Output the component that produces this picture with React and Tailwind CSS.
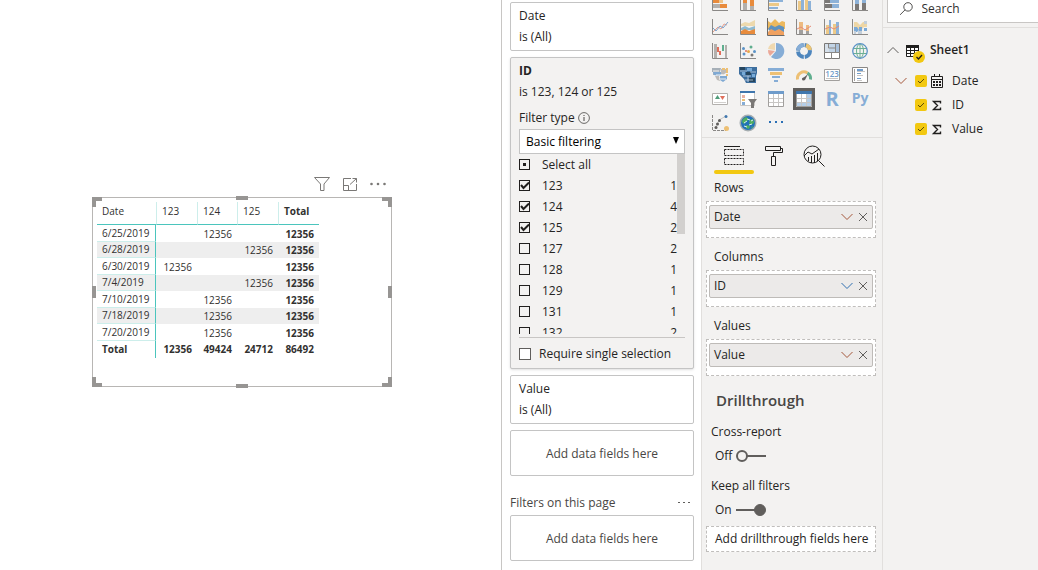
import { useState } from "react";
import clsx from "clsx";

const COLUMNS = ["123", "124", "125"];

const MATRIX = [
  { date: "6/25/2019", values: ["", "12356", ""], total: "12356" },
  { date: "6/28/2019", values: ["", "", "12356"], total: "12356" },
  { date: "6/30/2019", values: ["12356", "", ""], total: "12356" },
  { date: "7/4/2019", values: ["", "", "12356"], total: "12356" },
  { date: "7/10/2019", values: ["", "12356", ""], total: "12356" },
  { date: "7/18/2019", values: ["", "12356", ""], total: "12356" },
  { date: "7/20/2019", values: ["", "12356", ""], total: "12356" },
];

const FILTER_ITEMS = [
  { id: "123", count: 1 },
  { id: "124", count: 4 },
  { id: "125", count: 2 },
  { id: "127", count: 2 },
  { id: "128", count: 1 },
  { id: "129", count: 1 },
  { id: "131", count: 1 },
  { id: "132", count: 2 },
];

const axis = <path d="M.5 0V15.5H16" fill="none" stroke="#8a8886" />;

const VISUALS = [
  {
    name: "Stacked bar chart",
    art: (
      <>
        <path d="M1 4h6v4H1z" fill="#e88b3c" />
        <path d="M7 4h4v4H7z" fill="#edc48a" />
        <path d="M1 9h7v4H1z" fill="#b3b0ad" />
        <path d="M8 9h7v4H8z" fill="#e88b3c" />
        {axis}
      </>
    ),
  },
  {
    name: "Stacked column chart",
    art: (
      <>
        <path d="M3 8h4v7H3zM10 11h4v4h-4z" fill="#b3b0ad" />
        <path d="M3 2h4v6H3zM10 4h4v7h-4z" fill="#e88b3c" />
        {axis}
      </>
    ),
  },
  {
    name: "Clustered bar chart",
    art: (
      <>
        <path d="M1 5h14v2H1zM1 12h9v2H1z" fill="#8db2d8" />
        <path d="M1 8h10v3H1z" fill="#edc987" />
        {axis}
      </>
    ),
  },
  {
    name: "Clustered column chart",
    art: (
      <>
        <path d="M2 6h3v9H2zM9 4h3v11H9z" fill="#edc987" />
        <path d="M5 2h3v13H5zM12 6h3v9h-3z" fill="#8db2d8" />
        {axis}
      </>
    ),
  },
  {
    name: "100% stacked bar chart",
    art: (
      <>
        <path d="M1 4h5v4H1zM1 9h7v4H1z" fill="#7a7876" />
        <path d="M6 4h9v4H6zM8 9h7v4H8z" fill="#8db2d8" />
        {axis}
      </>
    ),
  },
  {
    name: "100% stacked column chart",
    art: (
      <>
        <path d="M3 9h4v6H3zM10 8h4v7h-4z" fill="#7a7876" />
        <path d="M3 2h4v7H3zM10 2h4v6h-4z" fill="#8db2d8" />
        {axis}
      </>
    ),
  },
  {
    name: "Line chart",
    art: (
      <>
        <path d="M1 13l5-5 3 2 3-5 3 1" fill="none" stroke="#e9a08d" />
        <path d="M1 9l3 3 4-5 3 2 5-6" fill="none" stroke="#7ba3cd" />
        {axis}
      </>
    ),
  },
  {
    name: "Area chart",
    art: (
      <>
        <path d="M1 5l4-2 4 1 6-3v6H1z" fill="#edd9ad" />
        <path d="M1 9l4-2 4 2 6-2v4H1z" fill="#8fbad0" />
        <path d="M1 12l4-2 4 2 6-2v5H1z" fill="#e88b3c" />
        {axis}
      </>
    ),
  },
  {
    name: "Stacked area chart",
    art: (
      <>
        <path d="M0 2l3 2 4-4 4 4 3-2 3 1v7H0z" fill="#edb95e" />
        <path d="M0 10l3-4 4 2 4-2 5 2v5l-3 2-9-1z" fill="#5f92bf" />
        <path d="M0 13l3-3 4 2 4-2 5 3v3H0z" fill="#f0a160" />
        <path d="M-.5-1v17.500h17" fill="none" stroke="#6b6967" />
      </>
    ),
  },
  {
    name: "Line and stacked column chart",
    art: (
      <>
        <path d="M3 3h4v9H3zM10 6h3v7h-3z" fill="#edba80" />
        <path d="M3 11h4v4H3zM10 12h3v3h-3z" fill="#a19f9d" />
        <path d="M1 10l4-2 4 3 6-4" fill="none" stroke="#e58a78" />
        {axis}
      </>
    ),
  },
  {
    name: "Line and clustered column chart",
    art: (
      <>
        <path d="M2 6h3v9H2zM9 5h3v10H9z" fill="#edc987" />
        <path d="M5 1h2v14H5zM12 3h3v12h-3z" fill="#8db2d8" />
        <path d="M1 10l5-2 4 2 5-3" fill="none" stroke="#e58a78" />
        {axis}
      </>
    ),
  },
  {
    name: "Ribbon chart",
    art: (
      <>
        <path d="M2 3h3l3 3 3-3h4v5h-3l-4 4-4-4H2z" fill="#edd6a5" />
        <path d="M2 8h3l2 3-2 2H2zM7 8h3v4H7zM12 9h3v3h-3z" fill="#7ba9d6" />
        <path d="M2 12h2v3H2zM6 12h4v3H6zM12 2h3v3h-3z" fill="#c3cfda" />
        {axis}
      </>
    ),
  },
  {
    name: "Waterfall chart",
    art: (
      <>
        <path d="M2 1h3v14H2zM13 2h2v13h-2z" fill="#b3b0ad" />
        <path d="M5 4h2v5H5zM7 8h2v4H7z" fill="#e0705c" />
        <path d="M10 2h2v6h-2z" fill="#5fae8e" />
        {axis}
      </>
    ),
  },
  {
    name: "Scatter chart",
    art: (
      <>
        <circle cx="3.500" cy="5.500" r="1.500" fill="#5b93c7" />
        <circle cx="11" cy="4" r="1.500" fill="#5fae8e" />
        <circle cx="4" cy="11" r="1.500" fill="#5b93c7" />
        <circle cx="8.500" cy="8.500" r="1.500" fill="#e8a94a" />
        <circle cx="14.500" cy="8.500" r="1.500" fill="#5b93c7" />
        <circle cx="6" cy="8" r="1" fill="#e0705c" />
        <circle cx="12" cy="12" r="1.500" fill="#7a7876" />
        {axis}
      </>
    ),
  },
  {
    name: "Pie chart",
    art: (
      <>
        <path d="M8 8V0a8 8 0 1 1-5 14z" fill="#86add6" />
        <path d="M7 7V0a7 7 0 0 0-7 6z" fill="#f0d9b0" />
        <path d="M7 8L0 7a8 8 0 0 0 2 6z" fill="#eba898" />
      </>
    ),
  },
  {
    name: "Donut chart",
    art: (
      <>
        <circle cx="8" cy="8" r="6" fill="none" stroke="#4e86bd" strokeWidth="4" strokeDasharray="8.400 1" />
        <path d="M10 2.300A6 6 0 0 1 14 7" fill="none" stroke="#edc472" strokeWidth="4" />
        <path d="M2.200 7A6 6 0 0 1 7 2" fill="none" stroke="#86add6" strokeWidth="4" />
      </>
    ),
  },
  {
    name: "Treemap",
    art: (
      <>
        <path d="M.5.5h15v15H.5z" fill="#fff" stroke="#7a7876" />
        <path d="M1 1h9v8H1z" fill="#d6e0ea" />
        <path d="M5 1h6v8H5z" fill="#c2d4e6" />
        <path d="M11 1h4v8h-4z" fill="#a9c1db" />
        <path d="M0 9.500h16M7.500 9.500V16M11.500 1v8M4.500 1v4h7" fill="none" stroke="#8a8886" />
      </>
    ),
  },
  {
    name: "Map",
    art: (
      <g fill="none">
        <path d="M1 5.500h14M1 10.500h14M8 1v14" stroke="#6cb095" />
        <ellipse cx="8" cy="8" rx="3.500" ry="7" stroke="#6cb095" />
        <circle cx="8" cy="8" r="7.300" stroke="#5b93c7" strokeWidth="1.300" />
      </g>
    ),
  },
  {
    name: "Filled map",
    art: (
      <>
        <path d="M0 1h9l-1 4H6v3H1V5H0z" fill="#a7b0b8" />
        <path d="M1 5h8l1 2-3 2-5-1zM8 9h7v3l-4 3-3-2z" fill="#7fa9d3" />
        <path d="M9 2h5l1 3-4 3-2-2zM3 9h4l1 5-3-1z" fill="#bdbbb9" />
        <path d="M14 1h2v5h-2zM14 7h2v2h-2zM10 1h3v2h-3z" fill="#edc074" />
        <path d="M1 4h6M4 8h9M7 12h7" stroke="#f3f2f1" />
      </>
    ),
  },
  {
    name: "Shape map",
    art: (
      <>
        <path d="M-1 0h18v6l-1 3v7H6l-2-4-5-5z" fill="#3d6e9e" />
        <path d="M0 0h5v3H0zM6 5h5v3H6zM9 11h6v4H9z" fill="#26465f" />
        <path d="M7 1h5v3H7zM2 5h3v3H2zM12 7h3v3h-3z" fill="#78abd8" />
        <path d="M0 4h7M10 5h6M3 9h8M8 9v6M5 13h8" stroke="#d5e3ef" strokeWidth=".7" />
      </>
    ),
  },
  {
    name: "Funnel",
    art: (
      <>
        <path d="M0 1h16v3H0zM4 9h8v2H4zM6 13h4v2H6z" fill="#86add6" />
        <path d="M2 5h12v3H2z" fill="#edc074" />
      </>
    ),
  },
  {
    name: "Gauge",
    art: (
      <>
        <path d="M1.500 12.500a6.500 6.500 0 0 1 10-6.500" fill="none" stroke="#edc074" strokeWidth="3" />
        <path d="M11.500 6a6.500 6.500 0 0 1 3 6.500" fill="none" stroke="#5fae8e" strokeWidth="3" />
        <path d="M6 12l6-5-3 6z" fill="#605e5c" />
        <circle cx="7.500" cy="12" r="1.500" fill="#605e5c" />
      </>
    ),
  },
  {
    name: "Card",
    art: (
      <>
        <path d="M.5 2.500h15v11H.5z" fill="#fff" stroke="#a19f9d" />
        <text x="8" y="10" textAnchor="middle" fontSize="8" fontWeight="600" fill="#6f9ccb">
          123
        </text>
        <path d="M2 11.500h12" stroke="#c8c6c4" />
      </>
    ),
  },
  {
    name: "Multi-row card",
    art: (
      <>
        <path d="M.5.5h15v15H.5z" fill="#fff" stroke="#8a8886" />
        <path d="M2.500 2v12" stroke="#a19f9d" />
        <path d="M5 2h6v2H5zM5 6h4v1H5zM5 11h4v1H5z" fill="#6f9ccb" />
        <path d="M5 4.500h8M5 8.500h6M5 13.500h5" stroke="#c8c6c4" />
      </>
    ),
  },
  {
    name: "KPI",
    art: (
      <>
        <path d="M.5 2.500h15v11H.5z" fill="#fff" stroke="#b3b0ad" />
        <path d="M3 8l2.500-4L8 8z" fill="#4f9c79" />
        <path d="M8 5h5l-2.500 4z" fill="#e0705c" />
        <path d="M2 11.500h12" stroke="#d2d0ce" />
      </>
    ),
  },
  {
    name: "Slicer",
    art: (
      <>
        <path d="M.5.5h14v14H.5z" fill="#fff" stroke="#c8c6c4" />
        <path d="M0 0h15v2H0z" fill="#3f76ad" />
        <path d="M2 4h3v3H2z" fill="#e9b3a4" />
        <path d="M2 8h3v2H2z" fill="#edc074" />
        <path d="M2 11h3v3H2z" fill="#86add6" />
        <path d="M8 8h9l-3 4v5h-3v-5z" fill="#7a7876" />
      </>
    ),
  },
  {
    name: "Table",
    art: (
      <>
        <path d="M.5.5h15v15H.5z" fill="#fff" stroke="#a19f9d" />
        <path d="M0 0h16v3H0z" fill="#6f9ccb" />
        <path d="M1 7.500h14M1 11.500h14M5.500 3v12M10.500 3v12" stroke="#c8c6c4" />
      </>
    ),
  },
  {
    name: "Matrix",
    active: true,
    art: (
      <>
        <path d="M.5.5h15v15H.5z" fill="#fff" stroke="#a19f9d" />
        <path d="M11 3h4v12h-4zM1 12h14v3H1z" fill="#b5cee8" />
        <path d="M0 0h16v3H0z" fill="#3f76ad" />
        <path d="M1 7.500h14M1 11.500h14M5.500 3v12M10.500 3v12" stroke="#c8c6c4" />
      </>
    ),
  },
  {
    name: "R script visual",
    art: (
      <text x="8" y="15" textAnchor="middle" fontSize="20" fontWeight="700" fill="#86add6">
        R
      </text>
    ),
  },
  {
    name: "Python visual",
    art: (
      <text x="8" y="12" textAnchor="middle" fontSize="14" fontWeight="700" fill="#86add6">
        Py
      </text>
    ),
  },
  {
    name: "Key influencers",
    art: (
      <>
        <path d="M.5 0V15.500H14" fill="none" stroke="#8a8886" strokeDasharray="3 1" />
        <path d="M7 5l7-4M4 13l3-8" stroke="#c8c6c4" />
        <circle cx="14" cy="1.500" r="1.500" fill="#3f76ad" />
        <circle cx="7.500" cy="5.500" r="1.500" fill="#605e5c" />
        <circle cx="5.500" cy="9" r="1.500" fill="#605e5c" />
        <circle cx="4" cy="12.500" r="1.500" fill="#605e5c" />
        <circle cx="14.500" cy="13.500" r="2.500" fill="#edc074" />
      </>
    ),
  },
  {
    name: "ArcGIS map",
    art: (
      <>
        <circle cx="8" cy="8" r="8.500" fill="#a5adb0" />
        <circle cx="8" cy="8" r="7" fill="#2272b9" />
        <path d="M3 4l3-2 3 2-2 2-3 3-2-2zM10 5l3-1 1 4-3 2-2-2zM6 10l4 1-1 3-3-1zM12 11l1 1-2 2z" fill="#4fae5f" />
        <path d="M4 8l3-2M9 10l3-1M7 4l3 1M4 11l3 1M11 6l2-1" stroke="#d9ecf5" />
      </>
    ),
  },
  {
    name: "More visuals",
    art: <path d="M1 6h2v2H1zM7 6h2v2H7zM13 6h2v2h-2z" fill="#2a6fb5" />,
  },
];

function FilterCard({ title, summary }) {
  return (
    <section className="rounded-xs border border-[#c4c4c4] bg-white px-2 pt-[2px] pb-[3px] leading-[21px]">
      <h3>{title}</h3>
      <p>{summary}</p>
    </section>
  );
}

function DropCard() {
  return (
    <div className="flex h-[46px] items-center justify-center rounded-xs border border-[#c4c4c4] bg-white pt-px text-[#484644]">
      Add data fields here
    </div>
  );
}

function FilterCheck({ label, count, checked, mixed, onChange }) {
  return (
    <label className="flex h-[21px] shrink-0 items-center">
      <span className="relative mr-3 flex">
        <input
          type="checkbox"
          checked={checked}
          onChange={onChange}
          className="size-[11px] appearance-none border border-[#201f1e]"
        />
        <svg viewBox="0 0 11 11" className="pointer-events-none absolute inset-0 size-[11px]">
          {mixed && <path d="M4 4h3v3H4z" fill="#201f1e" />}
          {checked && <path d="M2 5l2.500 3L10 2.500" fill="none" stroke="#201f1e" strokeWidth="2" />}
        </svg>
      </span>
      <span className="flex-1">{label}</span>
      <span>{count}</span>
    </label>
  );
}

function IdFilter() {
  const [selected, setSelected] = useState(["123", "124", "125"]);
  const [single, setSingle] = useState(false);

  const toggle = (id) => {
    setSelected((prev) => (prev.includes(id) ? prev.filter((x) => x !== id) : [...prev, id]));
  };

  return (
    <section className="rounded-xs border border-[#c4c4c4] bg-[#f3f2f1] px-2 pt-[2px] pb-1 leading-[21px] shadow-sm">
      <h3 className="font-bold">ID</h3>
      <p>is 123, 124 or 125</p>
      <div className="mt-[5px] flex items-center gap-[3px]">
        <label htmlFor="filter-type">Filter type</label>
        <svg viewBox="0 0 12 12" className="size-3" fill="none" stroke="#484644">
          <circle cx="6" cy="6" r="5.400" strokeWidth=".8" />
          <path d="M6 5v4M6 3v1" />
        </svg>
      </div>
      <div className="relative mt-px">
        <select
          id="filter-type"
          className="block h-[25px] w-full appearance-none border border-[#c4c4c4] bg-white px-[6px] text-black"
        >
          <option>Basic filtering</option>
          <option>Advanced filtering</option>
        </select>
        <svg viewBox="0 0 8 8" className="pointer-events-none absolute top-2 right-[5px] size-2">
          <path d="M1 0h6L4 7z" fill="#000" />
        </svg>
      </div>
      <div className="flex h-[180px] overflow-hidden">
        <div className="flex flex-1 flex-col">
          <FilterCheck label="Select all" mixed checked={false} onChange={() => setSelected([])} />
          {FILTER_ITEMS.map((item) => (
            <FilterCheck
              key={item.id}
              label={item.id}
              count={item.count}
              checked={selected.includes(item.id)}
              onChange={() => toggle(item.id)}
            />
          ))}
        </div>
        <div className="h-20 w-2 bg-[#d2d0ce]" />
      </div>
      <label className="mt-[3px] flex items-center gap-2 border-t border-[#c8c6c4] pt-[5px]">
        <input
          type="checkbox"
          checked={single}
          onChange={(e) => setSingle(e.target.checked)}
          className="size-3 appearance-none border border-[#605e5c] bg-white checked:bg-[#605e5c]"
        />
        Require single selection
      </label>
    </section>
  );
}

function FiltersPane() {
  return (
    <aside className="flex w-[200px] shrink-0 flex-col gap-[6px] border-l border-[#c8c6c4] bg-white pt-[2px] pr-[7px] pl-2">
      <FilterCard title="Date" summary="is (All)" />
      <IdFilter />
      <FilterCard title="Value" summary="is (All)" />
      <DropCard />
      <div className="mt-[11px] flex items-center justify-between leading-[20px] text-[#484644]">
        <h2>Filters on this page</h2>
        <button aria-label="More options" className="pr-1">
          <svg viewBox="0 0 12 4" className="h-1 w-3" fill="#605e5c">
            <path d="M0 1h2v1H0zM5 1h2v1H5zM10 1h2v1h-2z" />
          </svg>
        </button>
      </div>
      <div className="-mt-1">
        <DropCard />
      </div>
    </aside>
  );
}

function FieldWell({ label, field, chevron }) {
  return (
    <section className="mb-[9px]">
      <h3 className="pl-2 leading-[20px]">{label}</h3>
      <div className="mt-[3px] border border-dashed border-[#c0bebc] bg-white px-[2px] pt-[3px] pb-2">
        <div className="flex h-6 items-center rounded-xs border border-[#bebbb8] bg-[#eceae9] pr-1 pl-1">
          <span className="flex-1">{field}</span>
          <button aria-label={`${field} options`} className="mr-[5px]">
            <svg viewBox="0 0 12 8" className="h-2 w-3" fill="none" stroke={chevron}>
              <path d="M.5 1L6 6.500 11.500 1" />
            </svg>
          </button>
          <button aria-label={`Remove ${field}`}>
            <svg viewBox="0 0 10 10" className="size-[10px]" fill="none" stroke="#605e5c">
              <path d="M1 1l8 8M9 1L1 9" />
            </svg>
          </button>
        </div>
      </div>
    </section>
  );
}

function Toggle({ label, defaultChecked }) {
  const [on, setOn] = useState(defaultChecked);

  return (
    <div className="pl-[5px]">
      <h4 className="leading-[20px]">{label}</h4>
      <label className="mt-1 flex h-5 items-center gap-1 pl-1">
        {on ? "On" : "Off"}
        <span className="relative flex">
          <input
            type="checkbox"
            role="switch"
            aria-label={label}
            checked={on}
            onChange={(e) => setOn(e.target.checked)}
            className="h-3 w-[30px] appearance-none"
          />
          <svg viewBox="0 0 30 12" className="pointer-events-none absolute inset-0 h-3 w-[30px]" stroke="#605e5c">
            {on ? (
              <>
                <path d="M0 6h20" strokeWidth="2" />
                <circle cx="24" cy="6" r="5.500" fill="#605e5c" />
              </>
            ) : (
              <>
                <circle cx="6" cy="6" r="5" fill="none" strokeWidth="2" />
                <path d="M11 6h19" strokeWidth="2" />
              </>
            )}
          </svg>
        </span>
      </label>
    </div>
  );
}

function VisualizationsPane() {
  return (
    <aside className="flex w-[181px] shrink-0 flex-col border-l border-[#e1dfdd] bg-[#f3f2f1]">
      <div className="-mt-2 grid grid-cols-6 justify-start gap-y-[2px] border-b border-[#e1dfdd] pr-[5px] pb-[3px] pl-[7px]">
        {VISUALS.map((visual) => (
          <button
            key={visual.name}
            aria-label={visual.name}
            className={clsx(
              "flex size-[22px] items-center justify-center",
              visual.active && "border-3 border-[#605e5c]"
            )}
          >
            <svg viewBox="0 0 16 16" className="size-4 shrink-0 overflow-visible">
              {visual.art}
            </svg>
          </button>
        ))}
      </div>

      <div className="flex pt-[6px] pl-3">
        <button aria-label="Fields" className="flex w-10 flex-col items-center gap-[2px]">
          <svg viewBox="0 0 24 24" className="size-6" fill="none" stroke="#201f1e">
            <path d="M2 2.500h16" />
            <path d="M2.500 5.500h19v6h-19zM2.500 14.500h19v6h-19z" strokeDasharray="2 1" />
          </svg>
          <span className="h-1 w-full rounded-full bg-[#f2c811]" />
        </button>
        <button aria-label="Format" className="flex w-10 justify-center">
          <svg viewBox="0 0 24 24" className="size-6" fill="none" stroke="#201f1e">
            <path d="M3.500 2.500h15v4h-15zM18.500 4.500h2v4h-9v4M9.500 12.500h4v9h-4z" />
          </svg>
        </button>
        <button aria-label="Analytics" className="flex w-10 justify-center">
          <svg viewBox="0 0 24 24" className="size-6" fill="none" stroke="#201f1e">
            <circle cx="10.500" cy="10.500" r="8.500" />
            <path d="M16.500 16.500l6 6M2 12l4-4 4 2 7-5M6.500 13v4M9.500 12v7M12.500 11v8M15.500 9v8" />
          </svg>
        </button>
      </div>

      <div className="pt-1 pr-[6px] pl-1">
        <FieldWell label="Rows" field="Date" chevron="#a4573a" />
        <FieldWell label="Columns" field="ID" chevron="#2f6fb0" />
        <FieldWell label="Values" field="Value" chevron="#a4573a" />
        <h2 className="mt-3 pl-[10px] text-[15px] leading-[24px] font-semibold text-[#484644]">Drillthrough</h2>
        <div className="mt-[10px] flex flex-col gap-[10px]">
          <Toggle label="Cross-report" defaultChecked={false} />
          <Toggle label="Keep all filters" defaultChecked />
        </div>
        <div className="mt-[6px] border border-dashed border-[#c0bebc] bg-white pl-2 leading-[24px] whitespace-nowrap">
          Add drillthrough fields here
        </div>
      </div>
    </aside>
  );
}

function FieldRow({ name, date }) {
  const [checked, setChecked] = useState(true);

  return (
    <li className="flex h-6 items-center pl-3">
      <span className="w-5">
        {date && (
          <button aria-label={`Expand ${name}`} className="block">
            <svg viewBox="0 0 12 8" className="h-2 w-3" fill="none" stroke="#a4573a">
              <path d="M.5 1L6 6.500 11.500 1" />
            </svg>
          </button>
        )}
      </span>
      <label className="flex items-center">
        <span className="relative flex">
          <input
            type="checkbox"
            checked={checked}
            onChange={(e) => setChecked(e.target.checked)}
            className="size-3 appearance-none rounded-xs bg-white checked:bg-[#f2c811]"
          />
          <svg viewBox="0 0 12 12" className="pointer-events-none absolute inset-0 size-3" fill="none" stroke="#5c4d06">
            {checked && <path d="M3 6l2 2 4-4" />}
          </svg>
        </span>
        {date ? (
          <svg viewBox="0 0 12 13" className="mr-[9px] ml-1 h-[13px] w-3 overflow-visible" fill="none" stroke="#201f1e">
            <path d="M.5 1.500h11v11H.5zM.5 4.500h11M3.500-1v3M8.500-1v3" />
            <path d="M2 7h8M2 10h8" strokeWidth="2" strokeDasharray="2 1" />
          </svg>
        ) : (
          <svg viewBox="0 0 12 13" className="mr-[9px] ml-1 h-[13px] w-3" fill="none" stroke="#201f1e">
            <path d="M9.500 4.500v-2h-7l4 4-4 4h7v-2" strokeWidth="1.400" />
          </svg>
        )}
        {name}
      </label>
    </li>
  );
}

function FieldsPane() {
  return (
    <aside className="flex w-[156px] shrink-0 flex-col border-l border-[#e1dfdd] bg-[#f3f2f1]">
      <div className="border-b border-[#e1dfdd] pb-1 pl-1">
        <label className="-mt-[6px] flex h-[29px] items-center border border-r-0 border-[#c8c6c4] bg-white pl-3">
          <svg viewBox="0 0 16 16" className="size-4" fill="none" stroke="#323130">
            <circle cx="9.500" cy="5.500" r="5" />
            <path d="M6 9L0 15" />
          </svg>
          <input
            aria-label="Search"
            placeholder="Search"
            className="ml-2 w-full min-w-0 bg-transparent outline-none placeholder:text-[#323130]"
          />
        </label>
      </div>
      <div className="mt-[10px] flex h-6 items-center pl-1">
        <button aria-label="Collapse Sheet1">
          <svg viewBox="0 0 12 8" className="h-2 w-3" fill="none" stroke="#605e5c">
            <path d="M.5 7L6 1.500 11.500 7" />
          </svg>
        </button>
        <svg viewBox="0 0 20 20" className="mt-2 mr-1 ml-[7px] size-5">
          <path d="M.5 2.500h12v10H.5zM0 6.500h13M0 9.500h13M4.500 3v10M8.500 3v10" fill="#fff" stroke="#201f1e" />
          <path d="M0 1h13v3H0z" fill="#201f1e" />
          <circle cx="13" cy="13" r="6" fill="#f2c811" />
          <path d="M10.500 13l2 2 3.500-4" fill="none" stroke="#201f1e" strokeWidth="1.300" />
        </svg>
        <h2 className="font-semibold">Sheet1</h2>
      </div>
      <ul className="mt-[7px]">
        <FieldRow name="Date" date />
        <FieldRow name="ID" />
        <FieldRow name="Value" />
      </ul>
    </aside>
  );
}

function MatrixVisual() {
  return (
    <div className="w-[300px]">
      <div className="flex h-[21px] items-start justify-end gap-3 pr-[6px]">
        <button aria-label="Filters">
          <svg viewBox="0 0 16 16" className="size-4" fill="none" stroke="#7a7876">
            <path d="M.5 1.500h15L10 8v6.500H6.500V8z" />
          </svg>
        </button>
        <button aria-label="Focus mode">
          <svg viewBox="0 0 16 16" className="size-4" fill="none" stroke="#7a7876">
            <path d="M9 2.500H1.500v12h13V8M1.500 9.500h5v5M8 8.500l6.500-6M10.500 2.500h4v4" />
          </svg>
        </button>
        <button aria-label="More options">
          <svg viewBox="0 0 16 16" className="size-4" fill="#7a7876">
            <circle cx="1.500" cy="8" r="1.300" />
            <circle cx="8" cy="8" r="1.300" />
            <circle cx="14.500" cy="8" r="1.300" />
          </svg>
        </button>
      </div>
      <div className="relative h-[190px] border border-[#b8b6b4] px-1 pt-1">
        <span className="absolute -top-px -left-px size-[10px] border-t-4 border-l-4 border-[#979593]" />
        <span className="absolute -top-px -right-px size-[10px] border-t-4 border-r-4 border-[#979593]" />
        <span className="absolute -bottom-px -left-px size-[10px] border-b-4 border-l-4 border-[#979593]" />
        <span className="absolute -right-px -bottom-px size-[10px] border-r-4 border-b-4 border-[#979593]" />
        <span className="absolute -top-[2px] left-1/2 h-1 w-3 -translate-x-1/2 bg-[#979593]" />
        <span className="absolute -bottom-[2px] left-1/2 h-1 w-3 -translate-x-1/2 bg-[#979593]" />
        <span className="absolute top-1/2 -left-px h-3 w-1 -translate-y-1/2 bg-[#979593]" />
        <span className="absolute top-1/2 -right-px h-3 w-1 -translate-y-1/2 bg-[#979593]" />

        <table className="w-[222px] table-fixed border-separate border-spacing-0 text-[10px] text-[#323130]">
          <colgroup>
            <col className="w-[59px]" />
            <col className="w-[41px]" />
            <col className="w-10" />
            <col className="w-[41px]" />
            <col className="w-[41px]" />
          </colgroup>
          <thead>
            <tr className="h-[23px] text-left">
              <th className="border-b border-[#4bc5bd] pb-1 pl-[5px] font-normal">Date</th>
              {COLUMNS.map((col) => (
                <th key={col} className="border-b border-l border-b-[#4bc5bd] border-l-[#cdeeeb] pb-1 pl-[5px] font-normal">
                  {col}
                </th>
              ))}
              <th className="border-b border-l border-b-[#4bc5bd] border-l-[#cdeeeb] pb-1 pl-[5px] font-bold">Total</th>
            </tr>
          </thead>
          <tbody className="leading-[15px]">
            {MATRIX.map((row, i) => (
              <tr key={row.date} className={i % 2 ? "h-4 bg-[#eeeeee]" : "h-[17px]"}>
                <th className="border-r border-b border-r-[#4bc5bd] border-b-[#cdeeeb] pl-[5px] text-left font-normal">
                  {row.date}
                </th>
                {row.values.map((value, j) => (
                  <td key={COLUMNS[j]} className="pt-px pr-[5px] text-right">
                    {value}
                  </td>
                ))}
                <td className="pt-px pr-[5px] text-right font-bold">{row.total}</td>
              </tr>
            ))}
          </tbody>
          <tfoot className="leading-[15px]">
            <tr className="h-[17px] font-bold">
              <th className="border-r border-[#4bc5bd] pl-[5px] text-left">Total</th>
              <td className="pr-[5px] text-right">12356</td>
              <td className="pr-[5px] text-right">49424</td>
              <td className="pr-[5px] text-right">24712</td>
              <td className="pr-[5px] text-right">86492</td>
            </tr>
          </tfoot>
        </table>
      </div>
    </div>
  );
}

export default function App() {
  return (
    <div className="flex h-screen overflow-hidden bg-white font-['Open_Sans','Noto_Sans',sans-serif] text-[12px] text-[#252423]">
      <main className="min-w-0 flex-1 pt-44 pl-[92px]">
        <MatrixVisual />
      </main>
      <FiltersPane />
      <VisualizationsPane />
      <FieldsPane />
    </div>
  );
}
